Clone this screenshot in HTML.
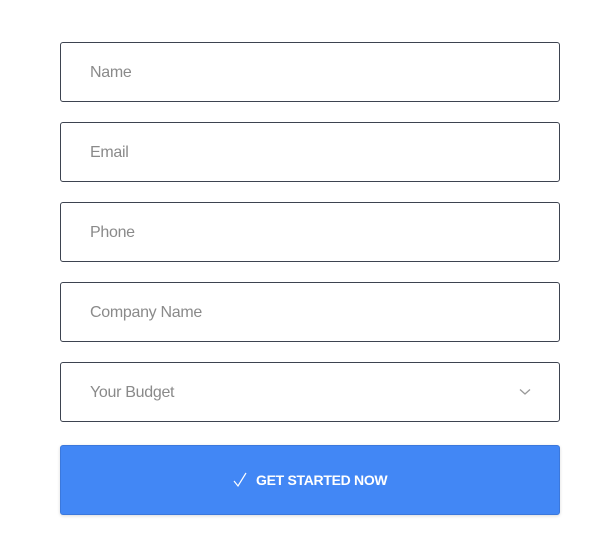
<!DOCTYPE html>
<html><head><style>
body{margin:0;background:#fff;width:593px;height:553px;font-family:"Liberation Sans",sans-serif;}
.f{position:absolute;left:60px;width:498px;height:58px;border:1px solid #3d4350;border-radius:3px;}
.f span{position:absolute;left:29px;top:21px;font-size:16px;color:#8a8a8a;letter-spacing:-0.3px}
.btn{position:absolute;left:60px;top:445px;width:498px;height:68px;background:#4287f5;border:1px solid #3b78dc;border-radius:3px;box-shadow:0 1px 3px rgba(0,0,0,.15);color:#fff;font-weight:bold;font-size:14px;}
.btn span{position:absolute;left:195px;top:26px;letter-spacing:-0.3px}
</style></head><body>
<div class="f" style="top:42px"><span>Name</span></div>
<div class="f" style="top:122px"><span>Email</span></div>
<div class="f" style="top:202px"><span>Phone</span></div>
<div class="f" style="top:282px"><span>Company Name</span></div>
<div class="f" style="top:362px"><span>Your Budget</span>
<svg style="position:absolute;left:458px;top:25px" width="12" height="8"><path d="M1 1.5L6 6L11 1.5" stroke="#999" stroke-width="1.3" fill="none"/></svg></div>
<div class="btn"><svg style="position:absolute;left:172px;top:26px" width="14" height="16"><path d="M1 9L5 14L13 1" stroke="#fff" stroke-width="1.2" fill="none"/></svg><span>GET STARTED NOW</span></div>
</body></html>
